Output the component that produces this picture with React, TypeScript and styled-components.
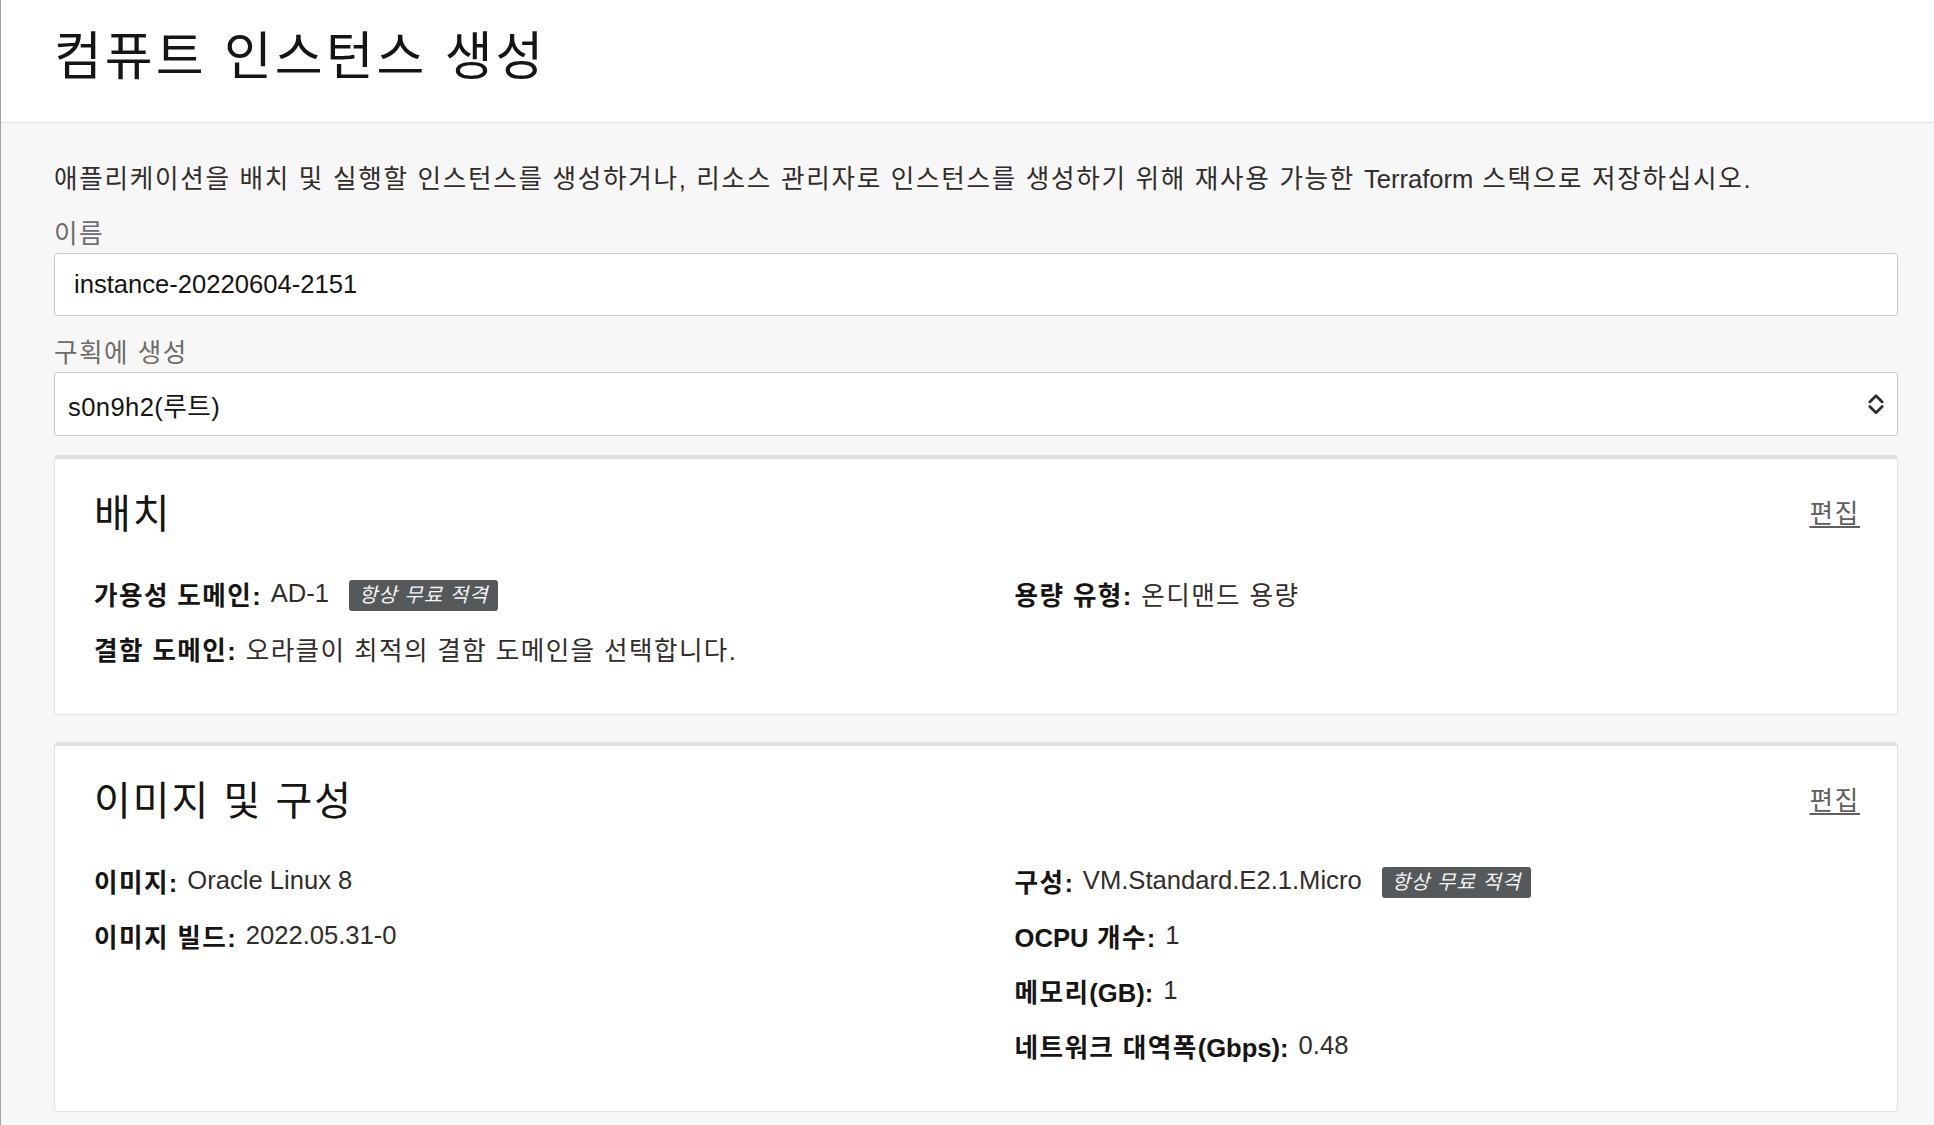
import type { ReactNode } from 'react';
import styled, { createGlobalStyle } from 'styled-components';

const GlobalStyle = createGlobalStyle`
  * { box-sizing: border-box; }
  html, body {
    margin: 0;
    padding: 0;
    background: #f7f7f7;
  }
  body {
    font-family: "Liberation Sans", "Noto Sans CJK KR", sans-serif;
    color: #312d2a;
  }
`;

// Whole window, with the thin gray window edge on the left
const Page = styled.div`
  min-height: 1125px;
  background: #f7f7f7;
  border-left: 1px solid #a3a3a3;
`;

const Header = styled.header`
  height: 123px;
  padding: 26px 0 0 53px;
  background: #fff;
  border-bottom: 1px solid #e3e3e3;
`;

const Title = styled.h1`
  margin: 0;
  font-size: 52px;
  line-height: 62px;
  font-weight: 400;
  letter-spacing: 3px;
  color: #161513;
`;

const Main = styled.main`
  padding: 38px 36px 40px 53px;
`;

// hangul in the original runs a little wider than Noto, latin does not
const Latin = styled.span`
  letter-spacing: 0;
`;

const Intro = styled.p`
  margin: 0;
  font-size: 25.6px;
  line-height: 36px;
  letter-spacing: 1.7px;
  color: #312d2a;
`;

const Field = styled.div`
  margin-top: 19px;
  display: flex;
  flex-direction: column;
  gap: 1px;
`;

const FieldLabel = styled.label`
  font-size: 25.6px;
  line-height: 36px;
  letter-spacing: 1.5px;
  color: #6f6c6a;
`;

const TextInput = styled.input`
  height: 63px;
  padding: 0 19px;
  font-family: inherit;
  font-size: 25.6px;
  color: #161513;
  background: #fff;
  border: 1px solid #c7c9cc;
  border-radius: 4px;
  outline: none;
`;

const SelectBox = styled.div`
  height: 64px;
  padding: 0 13px;
  display: flex;
  align-items: center;
  justify-content: space-between;
  font-size: 25.6px;
  letter-spacing: 0.4px;
  color: #161513;
  background: #fff;
  border: 1px solid #c7c9cc;
  border-radius: 4px;
`;

const Cards = styled.div`
  margin-top: 19px;
  display: flex;
  flex-direction: column;
  gap: 27px;
`;

const Card = styled.section`
  padding: 31px 34px 45px 39px;
  background: #fff;
  border: 1px solid #e1e1e1;
  border-top: 4px solid #dfe1e4;
  border-radius: 4px;
`;

const CardHead = styled.div`
  display: flex;
  align-items: center;
  justify-content: space-between;
`;

const CardTitle = styled.h2`
  margin: 0;
  font-size: 40px;
  line-height: 48px;
  font-weight: 400;
  letter-spacing: 2px;
  color: #161513;
`;

const EditLink = styled.a`
  margin-right: 3px;
  font-size: 25.6px;
  line-height: 36px;
  letter-spacing: 1.7px;
  color: #5f5f5f;
  text-decoration: underline;
  text-underline-offset: 3px;
  cursor: pointer;
`;

const Grid = styled.div`
  margin-top: 40px;
  display: grid;
  grid-template-columns: 1fr 1fr;
  column-gap: 72px;
`;

const Column = styled.div`
  display: flex;
  flex-direction: column;
  gap: 19px;
`;

const Row = styled.div`
  font-size: 25.6px;
  line-height: 36px;
  letter-spacing: 1.4px;
  white-space: nowrap;
`;

const Key = styled.span`
  font-weight: 700;
  color: #161513;
`;

// latin values sit a bit higher than the labels in the original
const Value = styled.span<{ $latin?: boolean }>`
  color: #312d2a;
  line-height: 1;
  letter-spacing: ${({ $latin }) => ($latin ? '0' : 'inherit')};
  vertical-align: ${({ $latin }) => ($latin ? '3px' : 'baseline')};
`;

const Badge = styled.span`
  display: inline-block;
  margin-left: 20px;
  padding: 0 10px;
  height: 31px;
  line-height: 31px;
  font-size: 20px;
  font-style: italic;
  letter-spacing: 1px;
  color: #f4f4f4;
  background: #56595c;
  border-radius: 3px;
  vertical-align: 3px;
`;

const Chevrons = () => (
  <svg width="16" height="24" viewBox="0 0 16 24" fill="none" stroke="#2f2f2f" strokeWidth="2.7" strokeLinecap="round" strokeLinejoin="round">
    <path d="M1.8 10 L8 3.8 L14.2 10" />
    <path d="M1.8 14.5 L8 20.7 L14.2 14.5" />
  </svg>
);

interface DetailProps {
  label: ReactNode;
  value: string;
  latin?: boolean;
  free?: boolean;
}

const Detail = ({ label, value, latin, free }: DetailProps) => (
  <Row>
    <Key>{label}:</Key> <Value $latin={latin}>{value}</Value>
    {free && <Badge>항상 무료 적격</Badge>}
  </Row>
);

export default function App() {
  return (
    <>
      <GlobalStyle />
      <Page>
        <Header>
          <Title>컴퓨트 인스턴스 생성</Title>
        </Header>
        <Main>
          <Intro>
            애플리케이션을 배치 및 실행할 인스턴스를 생성하거나, 리소스 관리자로 인스턴스를 생성하기 위해 재사용 가능한{' '}
            <Latin>Terraform</Latin> 스택으로 저장하십시오.
          </Intro>
          <Field>
            <FieldLabel htmlFor="name">이름</FieldLabel>
            <TextInput id="name" defaultValue="instance-20220604-2151" />
          </Field>
          <Field>
            <FieldLabel>구획에 생성</FieldLabel>
            <SelectBox>
              <span>s0n9h2(루트)</span>
              <Chevrons />
            </SelectBox>
          </Field>

          <Cards>
            <Card>
              <CardHead>
                <CardTitle>배치</CardTitle>
                <EditLink>편집</EditLink>
              </CardHead>
              <Grid>
                <Column>
                  <Detail label="가용성 도메인" value="AD-1" latin free />
                  <Detail label="결함 도메인" value="오라클이 최적의 결함 도메인을 선택합니다." />
                </Column>
                <Column>
                  <Detail label="용량 유형" value="온디맨드 용량" />
                </Column>
              </Grid>
            </Card>

            <Card>
              <CardHead>
                <CardTitle>이미지 및 구성</CardTitle>
                <EditLink>편집</EditLink>
              </CardHead>
              <Grid>
                <Column>
                  <Detail label="이미지" value="Oracle Linux 8" latin />
                  <Detail label="이미지 빌드" value="2022.05.31-0" latin />
                </Column>
                <Column>
                  <Detail label="구성" value="VM.Standard.E2.1.Micro" latin free />
                  <Detail label={<><Latin>OCPU</Latin> 개수</>} value="1" latin />
                  <Detail label={<>메모리<Latin>(GB)</Latin></>} value="1" latin />
                  <Detail label={<>네트워크 대역폭<Latin>(Gbps)</Latin></>} value="0.48" latin />
                </Column>
              </Grid>
            </Card>
          </Cards>
        </Main>
      </Page>
    </>
  );
}
